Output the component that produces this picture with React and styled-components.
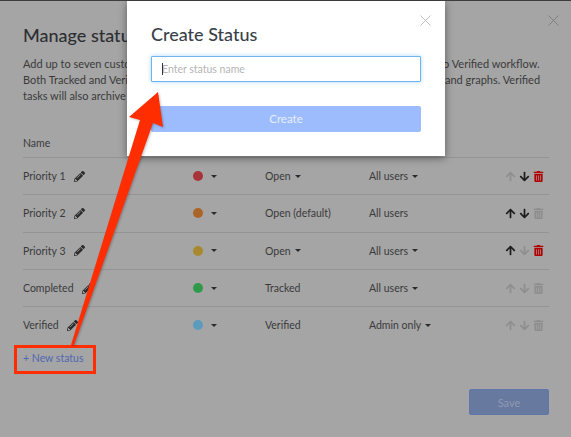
import React from "react";
import styled, { createGlobalStyle } from "styled-components";
import { FaPencilAlt, FaArrowUp, FaArrowDown, FaTrashAlt } from "react-icons/fa";

const rows = [
  { name: "Priority 1", color: "#a83338", status: "Open", statusMenu: true, users: "All users", usersMenu: true, up: false, down: true, del: true },
  { name: "Priority 2", color: "#ab6428", status: "Open (default)", users: "All users", up: true, down: true, del: false },
  { name: "Priority 3", color: "#a8892f", status: "Open", statusMenu: true, users: "All users", usersMenu: true, up: true, down: false, del: true },
  { name: "Completed", color: "#2f9a48", status: "Tracked", users: "All users", usersMenu: true, up: false, down: false, del: false },
  { name: "Verified", color: "#5b9bbd", status: "Verified", users: "Admin only", usersMenu: true, up: false, down: false, del: false },
];

const App = () => {
  return (
    <Page>
      <GlobalStyle />
      <Panel>
        <CloseBack>
          <CloseIcon />
        </CloseBack>
        <Title>Manage statuses</Title>
        <Intro>
          Add up to seven custom statuses in your boards and set up your own Open to Tracked to Verified workflow.
          <br />
          Both Tracked and Verified statuses are counted as completed tasks in all of your reports and graphs. Verified
          <br />
          tasks will also archive automatically.
        </Intro>
        <HeadRow>Name</HeadRow>
        {rows.map((row) => (
          <Row key={row.name}>
            <NameCell>
              {row.name}
              <FaPencilAlt size={11} color="#2b2b2b" />
            </NameCell>
            <ColorCell>
              <Dot $color={row.color} />
              <Caret />
            </ColorCell>
            <StatusCell>
              {row.status}
              {row.statusMenu && <Caret />}
            </StatusCell>
            <UsersCell>
              {row.users}
              {row.usersMenu && <Caret />}
            </UsersCell>
            <Actions>
              <FaArrowUp size={11} color={row.up ? "#1c1c1c" : "#8e8e8e"} />
              <FaArrowDown size={11} color={row.down ? "#1c1c1c" : "#8e8e8e"} />
              <FaTrashAlt size={11} color={row.del ? "#b30000" : "#8e8e8e"} />
            </Actions>
          </Row>
        ))}
        <NewStatus>
          + New status
          <Highlight />
        </NewStatus>
        <Footer>
          <SaveButton>Save</SaveButton>
        </Footer>
      </Panel>

      <Modal>
        <CloseFront>
          <CloseIcon />
        </CloseFront>
        <ModalTitle>Create Status</ModalTitle>
        <InputWrap>
          <NameInput placeholder="Enter status name" />
          <TextCursor />
        </InputWrap>
        <CreateButton>Create</CreateButton>
      </Modal>

      <Pointer viewBox="0 0 571 437">
        <polygon
          points="71,345 140,120 129,117 158,92 163,127 153,123 74,345"
          fill="#ff2d00"
        />
      </Pointer>
    </Page>
  );
};

export default App;

const CloseIcon = () => (
  <svg width="11" height="11" viewBox="0 0 11 11">
    <path d="M0.5 0.5 L10.5 10.5 M10.5 0.5 L0.5 10.5" stroke="currentColor" strokeWidth="0.9" fill="none" />
  </svg>
);

const GlobalStyle = createGlobalStyle`
  html, body {
    margin: 0;
    padding: 0;
    background: #a5a5a5;
  }
  * {
    box-sizing: border-box;
  }
`;

const Page = styled.div`
  position: relative;
  width: 571px;
  height: 437px;
  overflow: hidden;
  background: #a5a5a5;
  border-top: 1px solid #3c3c3c;
  font-family: Lato, "Open Sans", sans-serif;
  color: #333;
`;

const Panel = styled.div`
  position: relative;
  width: 100%;
  padding: 23px 22px 0 23px;
`;

const CloseBack = styled.div`
  position: absolute;
  top: 14px;
  right: 12px;
  display: flex;
  color: #7b7b7b;
`;

const Title = styled.h2`
  margin: 0 0 10px;
  font-size: 18px;
  line-height: 22px;
  font-weight: 500;
  color: #2d2f33;
  white-space: nowrap;
`;

const Intro = styled.p`
  margin: 0;
  font-size: 11px;
  line-height: 16px;
  white-space: nowrap;
  color: #3a3a3a;
`;

const HeadRow = styled.div`
  display: flex;
  align-items: flex-end;
  height: 32px;
  margin-top: 21px;
  padding-bottom: 8px;
  font-size: 10.5px;
  color: #3a3a3a;
`;

const Row = styled.div`
  display: grid;
  grid-template-columns: 170px 72px 104px 1fr auto;
  align-items: center;
  height: 37.3px;
  font-size: 10.5px;
  color: #3a3a3a;
  border-top: 1px solid #949494;
`;

const NameCell = styled.div`
  display: flex;
  align-items: center;
  gap: 8px;
`;

const ColorCell = styled.div`
  display: flex;
  align-items: center;
  gap: 7px;
`;

const Dot = styled.span`
  width: 10px;
  height: 10px;
  border-radius: 50%;
  background: ${({ $color }) => $color};
`;

const Caret = styled.span`
  display: inline-block;
  width: 0;
  height: 0;
  margin-left: 1px;
  border-left: 3px solid transparent;
  border-right: 3px solid transparent;
  border-top: 3px solid #2b2b2b;
`;

const StatusCell = styled.div`
  display: flex;
  align-items: center;
  gap: 3px;
`;

const UsersCell = styled(StatusCell)``;

const Actions = styled.div`
  display: flex;
  align-items: center;
  gap: 3px;
  padding-right: 5px;
`;

const NewStatus = styled.a`
  position: relative;
  display: inline-block;
  margin-top: 8px;
  font-size: 10.5px;
  line-height: 14px;
  color: #5068b0;
`;

const Highlight = styled.span`
  position: absolute;
  left: -9px;
  right: -13px;
  top: -6px;
  bottom: -9px;
  border: 3px solid #ff2d00;
`;

const Footer = styled.div`
  display: flex;
  justify-content: flex-end;
  margin-top: 24px;
`;

const SaveButton = styled.button`
  width: 80px;
  height: 26px;
  padding: 0;
  border: 1px solid #5f77ab;
  border-radius: 2px;
  background: #67799f;
  color: #8f9ab3;
  font-family: inherit;
  font-size: 11px;
`;

const Modal = styled.div`
  position: absolute;
  top: 0;
  left: 127px;
  width: 318px;
  height: 155px;
  padding: 22px 24px 0;
  background: #fff;
  box-shadow: 0 2px 8px rgba(0, 0, 0, 0.45);
`;

const CloseFront = styled.div`
  position: absolute;
  top: 14px;
  right: 14px;
  display: flex;
  color: #b9b9b9;
`;

const ModalTitle = styled.h3`
  margin: 0 0 11px;
  font-size: 18px;
  line-height: 22px;
  font-weight: 500;
  color: #3a3f4a;
`;

const InputWrap = styled.div`
  position: relative;
  width: 270px;
`;

const NameInput = styled.input`
  display: block;
  width: 100%;
  height: 26px;
  padding: 0 10px;
  border: 1px solid #6cb4ee;
  border-radius: 1px;
  outline: none;
  box-shadow: 0 0 4px rgba(108, 180, 238, 0.55);
  font-family: inherit;
  font-size: 10.5px;
  color: #333;

  &::placeholder {
    color: #b5b5b5;
    opacity: 1;
  }
`;

const TextCursor = styled.span`
  position: absolute;
  top: 7px;
  left: 11px;
  width: 1px;
  height: 12px;
  background: #333;
`;

const CreateButton = styled.button`
  display: block;
  width: 270px;
  height: 26px;
  margin-top: 24px;
  padding: 0 0 2px;
  border: none;
  border-radius: 2px;
  background: #9dbcfd;
  color: #e6eeff;
  font-family: inherit;
  font-size: 11.5px;
`;

const Pointer = styled.svg`
  position: absolute;
  top: -1px;
  left: 0;
  width: 571px;
  height: 437px;
  pointer-events: none;
  filter: drop-shadow(1px 1px 1px rgba(0, 0, 0, 0.25));
`;
